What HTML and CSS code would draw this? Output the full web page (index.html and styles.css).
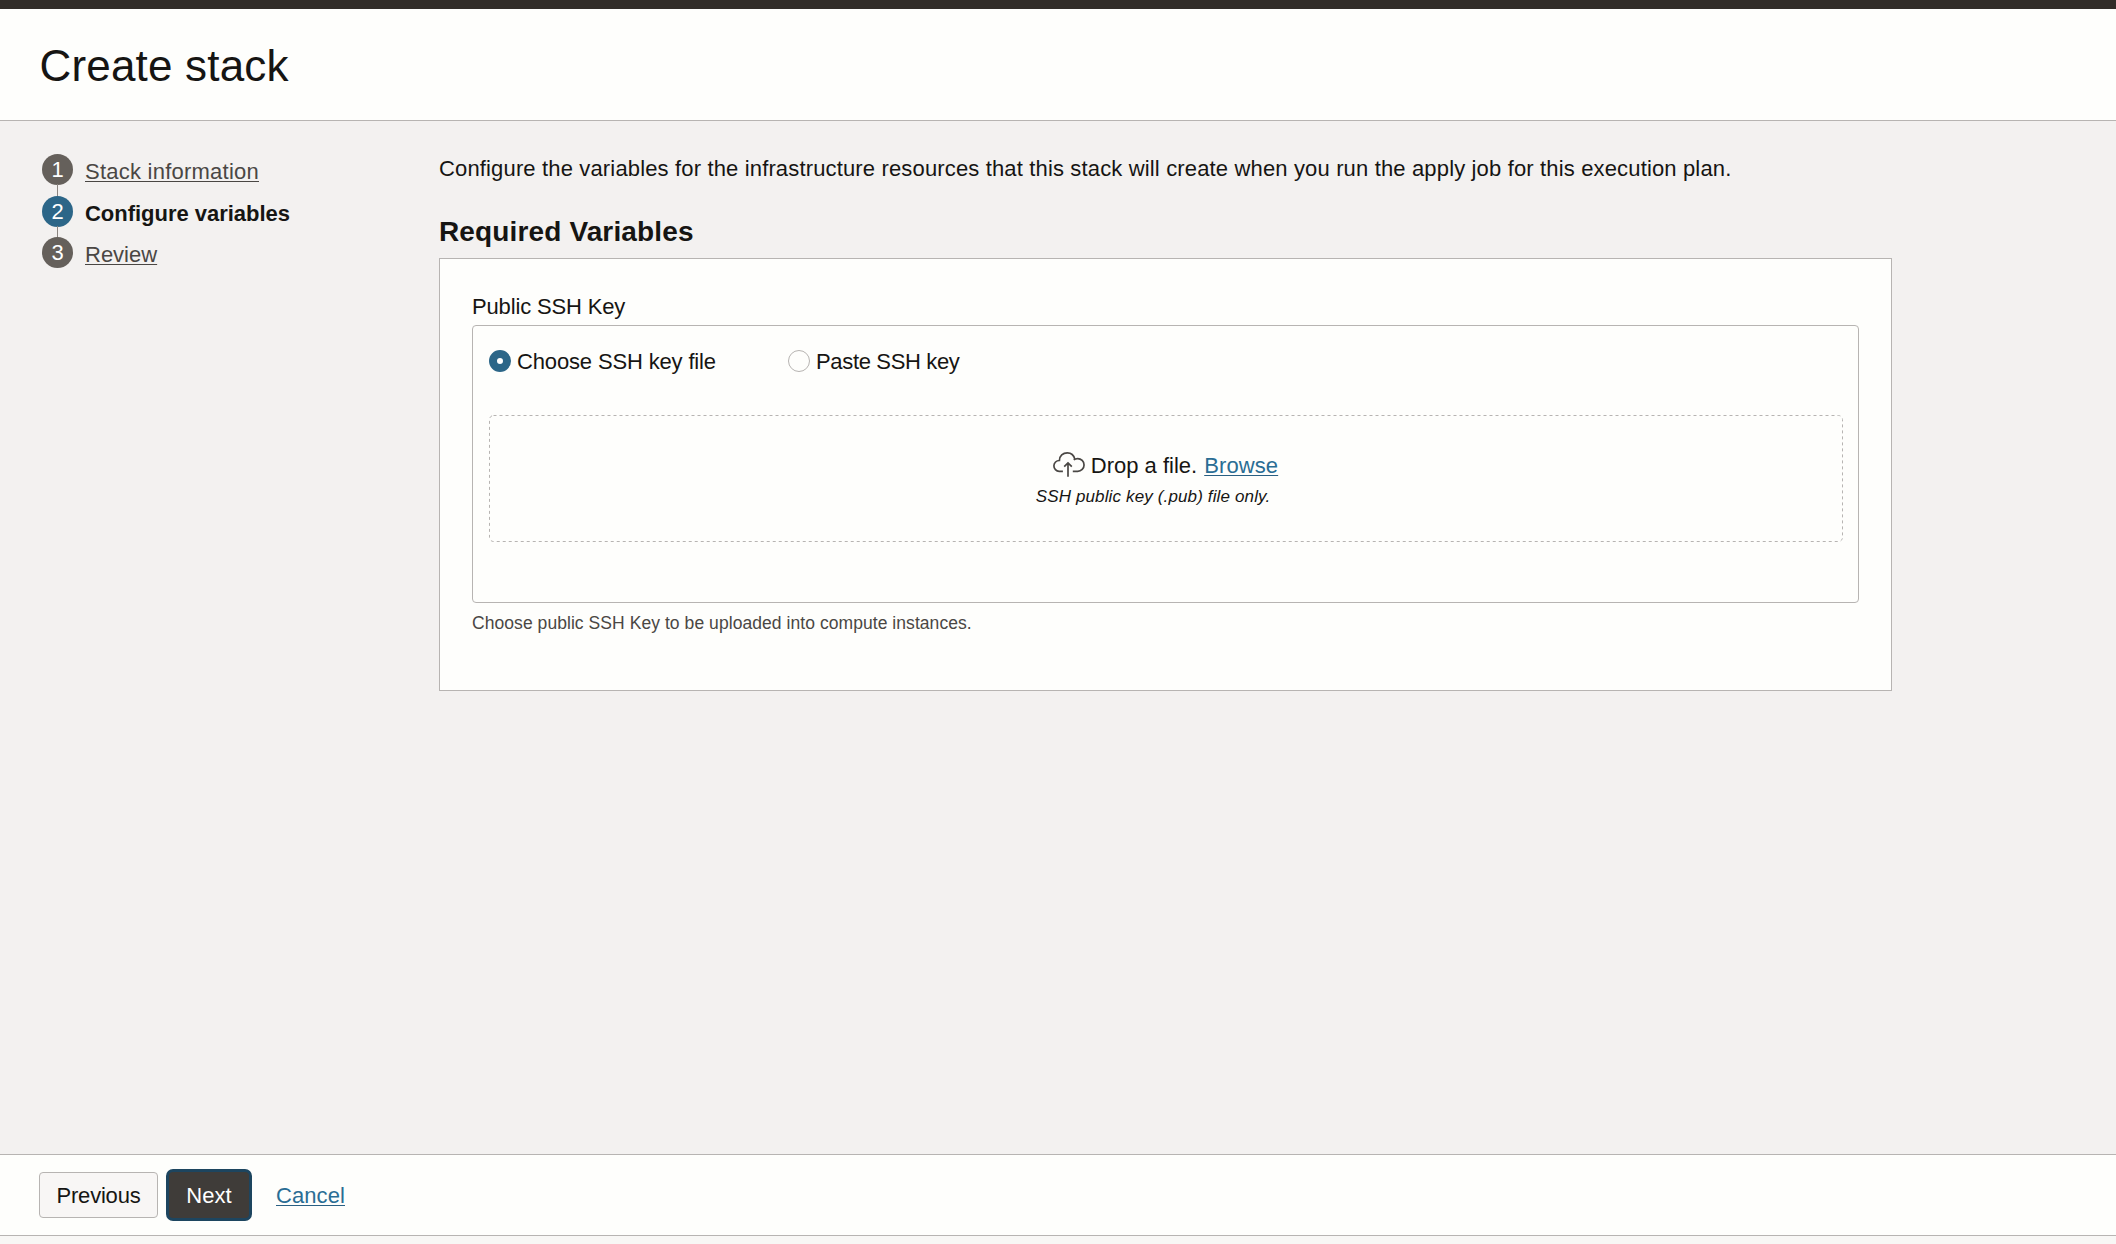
FILE: index.html
```
<!DOCTYPE html>
<html lang="en">
<head>
<meta charset="utf-8">
<title>Create stack</title>
<link rel="stylesheet" href="styles.css">
</head>
<body>
<div class="topbar"></div>
<header class="header"><h1 class="title">Create stack</h1></header>
<main class="main">
  <nav class="nav">
    <ol class="steps">
      <li class="step"><span class="badge">1</span><a class="step-label step-first">Stack information</a></li>
      <li class="step"><span class="badge badge-current">2</span><span class="step-label step-current">Configure variables</span></li>
      <li class="step"><span class="badge">3</span><a class="step-label">Review</a></li>
    </ol>
  </nav>
  <section class="content">
    <p class="intro">Configure the variables for the infrastructure resources that this stack will create when you run the apply job for this execution plan.</p>
    <h2 class="heading">Required Variables</h2>
    <div class="card">
      <div class="label">Public SSH Key</div>
      <div class="fieldset">
        <div class="radios">
          <label class="radio radio-file"><span class="dot dot-on"></span><span class="radio-text">Choose SSH key file</span></label>
          <label class="radio radio-paste"><span class="dot"></span><span class="radio-text">Paste SSH key</span></label>
        </div>
        <div class="dropzone">
          <svg class="drop-outline" width="1354" height="127" fill="none" stroke="#b7b4b2" stroke-dasharray="3 3">
            <rect x="0.5" y="0.5" width="1353" height="126" rx="4"/>
          </svg>
          <div class="drop-line">
            <svg class="cloud" width="32" height="27" viewBox="0 0 32 27" fill="none" stroke="#4a4744" stroke-width="1.7">
              <path d="M9.9 20.3H6.2A5.4 5.4 0 0 1 6.4 9.5C6.4 4.9 10 1.8 14.3 1.8C17.9 1.8 20.9 4.2 21.8 8.1"/>
              <path d="M20.8 8.9C21.8 8 23.2 7.6 24.7 7.6A6.35 6.35 0 0 1 24.7 20.3H19.8"/>
              <path d="M15 25.8V12.2M11.2 15.6L15 11.9L18.8 15.6"/>
            </svg>
            <span class="drop-text">Drop a file.</span>
            <a class="browse">Browse</a>
          </div>
          <div class="drop-hint">SSH public key (.pub) file only.</div>
        </div>
      </div>
      <div class="help">Choose public SSH Key to be uploaded into compute instances.</div>
    </div>
  </section>
</main>
<footer class="footer">
  <button class="btn btn-previous">Previous</button>
  <button class="btn btn-next">Next</button>
  <a class="cancel">Cancel</a>
</footer>
<div class="bottom-strip"></div>
</body>
</html>
```
FILE: styles.css
```
* { box-sizing: border-box; }

body {
  margin: 0;
  height: 1244px;
  display: flex;
  flex-direction: column;
  overflow: hidden;
  background: #f3f1f0;
  color: #161513;
  font: 22px/30px "Liberation Sans", Arial, sans-serif;
}

a { text-decoration: underline; text-decoration-thickness: 1px; text-underline-offset: 2px; }

.topbar { flex: none; height: 9px; background: #322d29; }

.header {
  flex: none;
  height: 112px;
  padding: 32px 39.5px 0;
  background: #fefefc;
  border-bottom: 1px solid #b7b4b2;
}
.title { margin: 0; font-size: 44px; line-height: 50px; font-weight: 400; letter-spacing: 0.18px; }

.main { flex: 1; display: flex; }

/* Wizard steps */
.nav { width: 439px; padding: 33px 0 0 42px; }
.steps { margin: 0; padding: 0; list-style: none; }
.step { position: relative; display: flex; gap: 12px; height: 41.5px; }
.step:not(:last-child)::before {
  content: "";
  position: absolute;
  left: 15px;
  top: 30px;
  width: 1px;
  height: 13px;
  background: #8b8580;
}
.badge {
  width: 31px;
  height: 31px;
  padding-top: 1px;
  border-radius: 50%;
  background: #65605b;
  color: #fff;
  text-align: center;
}
.badge-current { background: #2c6688; }
.step-label { margin-top: 3px; color: #4a4744; }
.step-first { letter-spacing: 0.237px; }
.step-current { color: #161513; font-weight: 700; letter-spacing: -0.02px; }

/* Form */
.content { width: 1453px; padding-top: 33px; }
.intro { margin: 0; white-space: nowrap; letter-spacing: 0.152px; }
.heading { margin: 30px 0 0; height: 44px; font-size: 28px; line-height: 36px; letter-spacing: 0.14px; }
.card {
  height: 433px;
  padding: 33px 32px 0;
  background: #fefefc;
  border: 1px solid #b7b4b2;
}
.label { height: 33px; letter-spacing: -0.15px; }
.fieldset {
  height: 278px;
  padding: 20px 15px 0 16px;
  border: 1px solid #b7b4b2;
  border-radius: 4px;
}
.radios { display: flex; height: 69px; }
.radio { display: flex; gap: 6px; align-items: flex-start; }
.radio-text { padding-top: 1px; }
.radio-file { width: 299px; letter-spacing: -0.15px; }
.radio-paste { letter-spacing: -0.34px; }
.dot {
  width: 22px;
  height: 22px;
  margin-top: 4px;
  border: 1px solid #b7b4b2;
  border-radius: 50%;
}
.dot-on { border: 8px solid #2c6688; background: #fff; }
.dropzone {
  position: relative;
  height: 127px;
  display: flex;
  flex-direction: column;
  align-items: center;
  padding-top: 36px;
}
.drop-outline { position: absolute; left: 0; top: 0; }
.drop-line { display: flex; align-items: flex-start; margin-right: 1px; }
.cloud { margin-right: 6px; }
.drop-text { margin-right: 7px; }
.browse, .cancel { color: #2a6d94; text-decoration-color: #2a6083; }
.browse { letter-spacing: 0.1px; }
.drop-hint { margin: 4px 26px 0 0; font-size: 17px; line-height: 24px; font-style: italic; letter-spacing: 0.135px; }
.help { margin-top: 8px; color: #4a4744; font-size: 17.5px; line-height: 24px; letter-spacing: 0.06px; }

/* Actions */
.footer {
  flex: none;
  height: 82px;
  display: flex;
  align-items: center;
  padding: 0 39px;
  background: #fefefc;
  border-top: 1px solid #b7b4b2;
  border-bottom: 1px solid #b7b4b2;
}
.btn { font: inherit; padding: 1px 0 0; text-align: center; }
.btn-previous {
  width: 119px;
  height: 46px;
  background: #f8f6f5;
  border: 1px solid #b7b4b2;
  border-radius: 4px;
  color: #161513;
  letter-spacing: -0.2px;
}
.btn-next {
  width: 86px;
  height: 52px;
  margin-left: 8px;
  background: #3f3c39;
  border: 3px solid #1d455f;
  border-radius: 7px;
  color: #fff;
  letter-spacing: 0.1px;
}
.cancel { margin-left: 24px; padding-top: 1px; letter-spacing: 0.086px; }
.bottom-strip { flex: none; height: 8px; background: #f8f7f5; }
```
